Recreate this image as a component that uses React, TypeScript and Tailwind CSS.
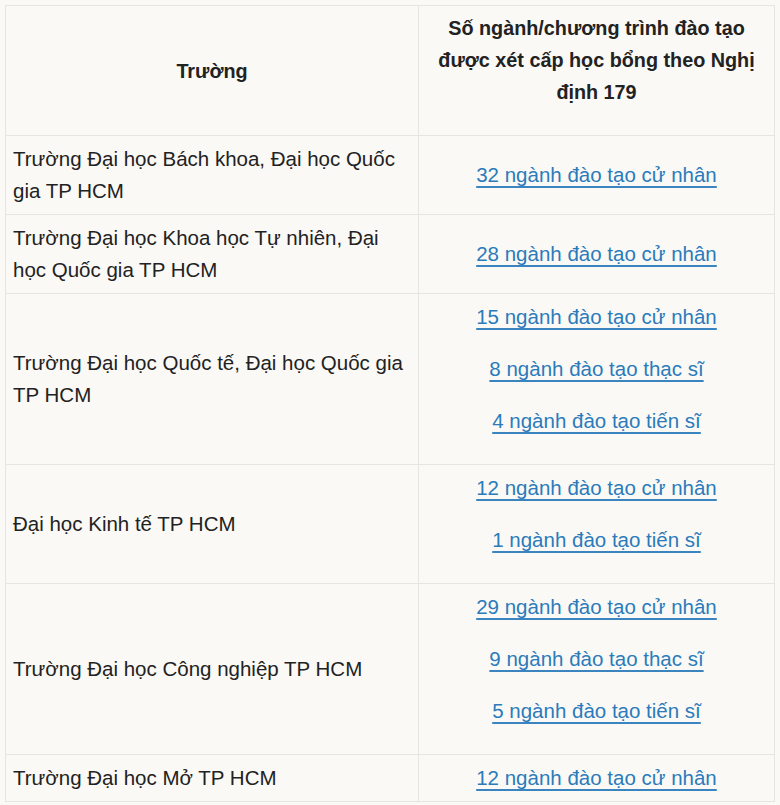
const rows: { school: string; programs: string[] }[] = [
  { school: 'Trường Đại học Bách khoa, Đại học Quốc gia TP HCM', programs: ['32 ngành đào tạo cử nhân'] },
  { school: 'Trường Đại học Khoa học Tự nhiên, Đại học Quốc gia TP HCM', programs: ['28 ngành đào tạo cử nhân'] },
  {
    school: 'Trường Đại học Quốc tế, Đại học Quốc gia TP HCM',
    programs: ['15 ngành đào tạo cử nhân', '8 ngành đào tạo thạc sĩ', '4 ngành đào tạo tiến sĩ'],
  },
  { school: 'Đại học Kinh tế TP HCM', programs: ['12 ngành đào tạo cử nhân', '1 ngành đào tạo tiến sĩ'] },
  {
    school: 'Trường Đại học Công nghiệp TP HCM',
    programs: ['29 ngành đào tạo cử nhân', '9 ngành đào tạo thạc sĩ', '5 ngành đào tạo tiến sĩ'],
  },
  { school: 'Trường Đại học Mở TP HCM', programs: ['12 ngành đào tạo cử nhân'] },
];

export default function App() {
  return (
    <div className="min-h-[805px] w-[780px] bg-[#faf9f6] p-[5px] pr-[6px] font-['Liberation_Sans'] text-[20.5px] leading-[32px] text-[#222]">
      <table className="w-[769px] table-fixed border-collapse">
        <colgroup>
          <col className="w-[413px]" />
          <col className="w-[356px]" />
        </colgroup>
        <thead>
          <tr>
            <th className="border border-[#e6e5e1] px-[7px] py-[6px] align-middle text-[19.8px] font-bold">Trường</th>
            <th className="border border-[#e6e5e1] px-[7px] pt-[6px] pb-[27px] text-center align-middle text-[19.8px] font-bold">
              Số ngành/chương trình đào tạo được xét cấp học bổng theo Nghị định 179
            </th>
          </tr>
        </thead>
        <tbody>
          {rows.map((r) => {
            const multi = r.programs.length > 1;
            return (
              <tr key={r.school}>
                <td className="border border-[#e6e5e1] px-[7px] py-[7px] align-middle">{r.school}</td>
                <td className="border border-[#e6e5e1] px-[7px] py-[7px] text-center align-middle">
                  {r.programs.map((p) => (
                    <p key={p} className={multi ? 'mb-[20px]' : ''}>
                      <a
                        href="#"
                        className="text-[#2b7bbb] underline decoration-[#3a84c0] decoration-2 underline-offset-[4px]"
                      >
                        {p}
                      </a>
                    </p>
                  ))}
                </td>
              </tr>
            );
          })}
        </tbody>
      </table>
    </div>
  );
}
